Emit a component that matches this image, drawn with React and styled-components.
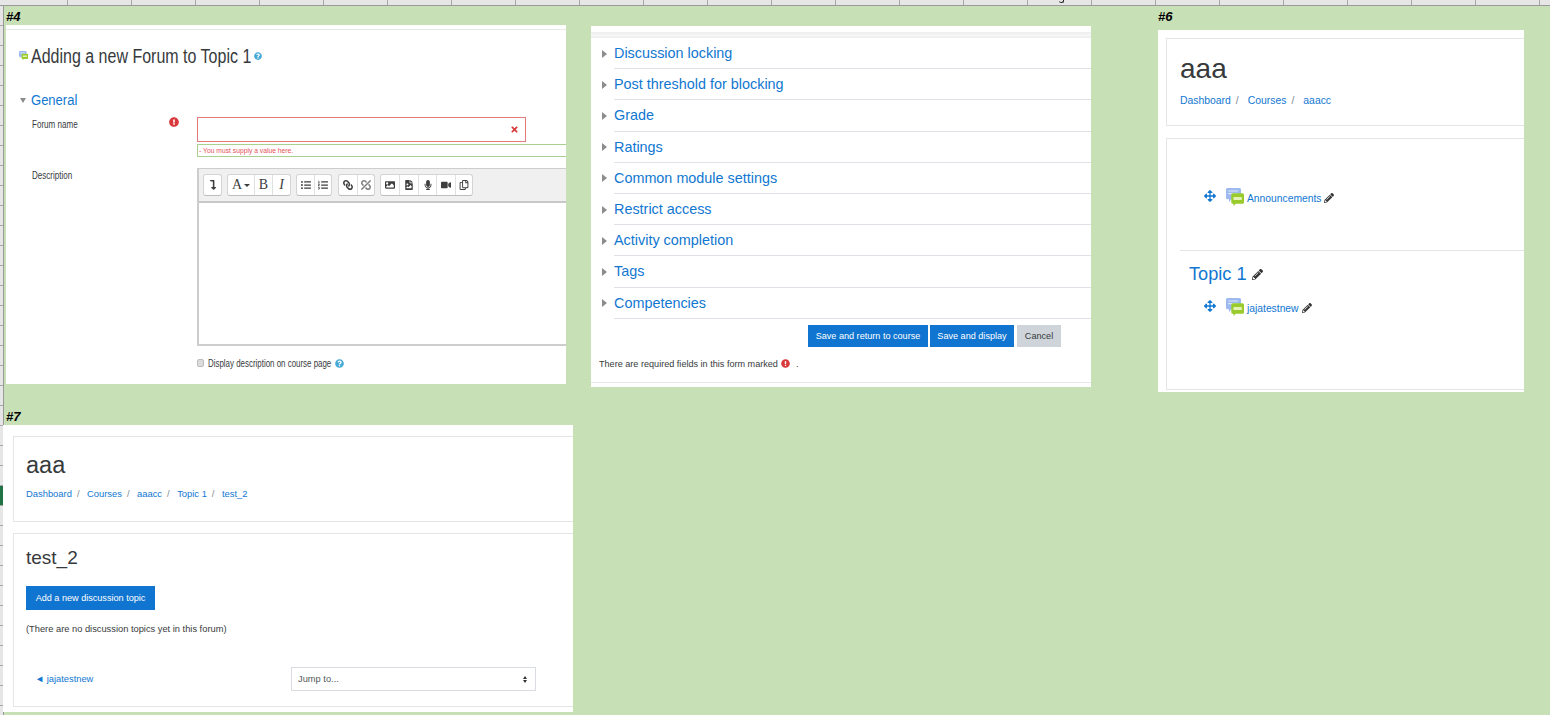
import styled, { createGlobalStyle } from 'styled-components';
import {
  FaArrowsAlt,
  FaExclamationCircle,
  FaLink,
  FaListOl,
  FaListUl,
  FaMicrophone,
  FaRegCopy,
  FaPencilAlt,
  FaQuestionCircle,
  FaTimes,
  FaUnlink,
  FaVideo,
  FaImage,
  FaFileImage,
  FaLevelDownAlt,
} from 'react-icons/fa';

const LINK = '#1177d1';
const TEXT = '#373a3c';
const LINE = '#e5e5e5';

const GlobalStyle = createGlobalStyle`
  html, body {
    margin: 0;
    padding: 0;
    overflow: hidden;
    background: #c8e0b5;
  }
  * { box-sizing: border-box; }
`;

const Sheet = styled.div`
  position: relative;
  width: 1550px;
  height: 715px;
  display: grid;
  grid-template-columns: 4px 1fr;
  grid-template-rows: 6px 1fr;
  font-family: 'Liberation Sans', Arial, sans-serif;
  color: ${TEXT};
  overflow: hidden;
`;

const Corner = styled.div`
  background: #e6e6e6;
  border-bottom: 1px solid #9a9a9a;
`;

const ColumnHeader = styled.div`
  display: flex;
  background: #e6e6e6;
  border-bottom: 1px solid #9a9a9a;
  padding-left: 63px;
`;

const ColumnCell = styled.div`
  flex: 0 0 64px;
  border-left: 1px solid #a8a8a8;
`;

const CursorMark = styled.i`
  position: absolute;
  left: 1059px;
  top: 0;
  width: 5px;
  height: 3px;
  border-bottom: 1px solid #222;
  border-right: 1px solid #222;
  border-radius: 0 0 3px 3px;
`;

const RowHeader = styled.div`
  display: flex;
  flex-direction: column;
  background: #e6e6e6;
  border-right: 1px solid #9a9a9a;
`;

const RowCell = styled.div`
  flex: 0 0 20px;
  border-bottom: 1px solid #a8a8a8;
  background: ${(p) => (p.$active ? '#217346' : 'transparent')};
`;

const Canvas = styled.div`
  position: relative;
  background: #c8e0b5;
`;

const SheetLabel = styled.span`
  position: absolute;
  left: ${(p) => p.$x}px;
  top: ${(p) => p.$y}px;
  font: italic bold 13px 'Liberation Sans', sans-serif;
  color: #000;
`;

const Shot = styled.section`
  position: absolute;
  left: ${(p) => p.$x}px;
  top: ${(p) => p.$y}px;
  width: ${(p) => p.$w}px;
  height: ${(p) => p.$h}px;
  background: #fff;
  overflow: hidden;
`;

/* Panel #4: form, captured slightly squeezed */
const Squeezed = styled.span`
  display: inline-block;
  white-space: nowrap;
  transform: scaleX(${(p) => p.$k || 0.8});
  transform-origin: left center;
`;

const FormShot = styled(Shot)`
  border-top: 1px solid #fff;
  padding: 3px 0 0 13px;
  &::before {
    content: '';
    display: block;
    height: 1px;
    margin: 0 0 0 -13px;
    background: #e8e8e8;
  }
`;

const PageTitle = styled.h2`
  display: flex;
  align-items: center;
  height: 24px;
  margin: 14px 0 0;
  font-size: 20px;
  font-weight: 400;
  line-height: 24px;
  gap: 3px;
`;

const TitleText = styled.span`
  width: 220px;
`;

const SectionRow = styled.div`
  display: flex;
  align-items: center;
  height: 18px;
  margin-top: 23px;
  color: ${LINK};
  font-size: 15.5px;
`;

const FieldRow = styled.div`
  display: flex;
  align-items: flex-start;
  margin-top: ${(p) => p.$top || 0}px;
`;

const FieldLabel = styled.div`
  flex: 0 0 ${(p) => p.$w || 178}px;
  padding-left: 13px;
  font-size: 11.5px;
  line-height: 14px;
`;

const RequiredMark = styled.div`
  flex: 0 0 28px;
  color: #d9393b;
  font-size: 10px;
  line-height: 14px;
`;

const FieldBody = styled.div`
  display: flex;
  flex-direction: column;
  width: 369px;
  flex: none;
`;

const TextInput = styled.div`
  display: flex;
  align-items: center;
  justify-content: flex-end;
  width: 329px;
  height: 25px;
  padding-right: 6px;
  border: 1px solid #e27a7a;
  color: #d9393b;
  font-size: 9px;
`;

const ErrorNote = styled.div`
  display: flex;
  align-items: center;
  height: 13px;
  margin-top: 2px;
  border: 1px solid #a9d08e;
  border-right: none;
  color: #e6505a;
  font-size: 7.5px;
  padding-left: 1px;
`;

const Editor = styled.div`
  height: 178px;
  border: solid #cdcdcd;
  border-width: 1px 0 2px 2px;
`;

const EditorBar = styled.div`
  display: flex;
  gap: 5px;
  height: 34px;
  padding: 5px 0 0 4px;
  background: #f0f0f0;
  border-bottom: 2px solid #c8c8c8;
`;

const ToolGroup = styled.div`
  display: flex;
  height: 22px;
  margin-left: ${(p) => p.$shift || 0}px;
  background: #fff;
  border: 1px solid #d4d4d4;
  border-bottom-color: #bdbdbd;
  border-radius: 3px;
`;

const ToolButton = styled.div`
  display: flex;
  align-items: center;
  justify-content: center;
  gap: 2px;
  width: ${(p) => p.$w || 17}px;
  color: #3e3e3e;
  font: ${(p) => (p.$italic ? 'italic ' : '')}14px 'Liberation Serif', serif;
  border-left: 1px solid #e0e0e0;
  &:first-child { border-left: none; }
  svg {
    width: 10px;
    height: 10px;
    transform: ${(p) => (p.$flip ? 'scaleX(-1)' : 'none')};
    opacity: ${(p) => (p.$faint ? 0.65 : 1)};
  }
`;

const EditorCaret = styled.i`
  width: 0;
  height: 0;
  border-left: 3px solid transparent;
  border-right: 3px solid transparent;
  border-top: 3px solid #3e3e3e;
`;

const CheckRow = styled.div`
  display: flex;
  align-items: center;
  height: 12px;
  margin: 11px 0 0 178px;
  font-size: 11px;
`;

const CheckBox = styled.i`
  flex: none;
  width: 7px;
  height: 8px;
  margin-right: 4px;
  background: #dcdcdc;
  border: 1px solid #bcbcbc;
  border-radius: 2px;
`;

const CheckText = styled.span`
  width: 127px;
`;

const HelpMark = styled(FaQuestionCircle)`
  flex: none;
  color: ${(p) => p.$color || '#46a9d6'};
  font-size: ${(p) => p.$size || 9}px;
`;

const RightCaret = styled.i`
  flex: none;
  width: 0;
  height: 0;
  border-top: 4px solid transparent;
  border-bottom: 4px solid transparent;
  border-left: 5px solid #8c8c8c;
`;

const DownCaret = styled.i`
  flex: none;
  width: 0;
  height: 0;
  margin: 0 5px 0 1px;
  border-left: 3.5px solid transparent;
  border-right: 3.5px solid transparent;
  border-top: 5px solid #8c8c8c;
`;

/* Panel: collapsed sections */
const SectionsShot = styled(Shot)`
  padding-top: 6px;
`;

const TopBand = styled.div`
  height: 6px;
  background: linear-gradient(#eeeeee, #f6f6f6 60%, #ececec);
`;

const Collapsed = styled.div`
  display: flex;
  align-items: center;
  height: 31.2px;
  padding-left: 11px;
  color: ${LINK};
  font-size: 14.4px;
`;

const CollapsedTitle = styled.div`
  flex: 1;
  height: 100%;
  margin-left: 7px;
  display: flex;
  align-items: center;
  border-bottom: 1px solid #dfe2e6;
`;

const ActionRow = styled.div`
  display: flex;
  gap: 2px;
  margin: 6px 0 0 217px;
`;

const Button = styled.div`
  display: flex;
  align-items: center;
  justify-content: center;
  width: ${(p) => (p.$w ? `${p.$w}px` : 'auto')};
  height: ${(p) => p.$h || 22}px;
  margin-left: ${(p) => p.$gap || 0}px;
  margin-top: ${(p) => p.$top || 0}px;
  background: ${(p) => (p.$muted ? '#ced4da' : '#0f75d0')};
  color: ${(p) => (p.$muted ? TEXT : '#fff')};
  font-size: 9.1px;
  white-space: nowrap;
`;

const RequiredNote = styled.div`
  display: flex;
  align-items: center;
  height: 14px;
  margin: 10px 0 0 8px;
  font-size: 9.1px;
  svg { margin: 0 6px 0 3px; color: #d9393b; font-size: 9px; }
`;

const BottomRule = styled.div`
  height: 1px;
  margin-top: 11px;
  background: #e8e8e8;
`;

/* Moodle course pages */
const CourseShot = styled(Shot)`
  padding: ${(p) => p.$pad || '8px 0 0 8px'};
`;

const Card = styled.div`
  height: ${(p) => p.$h}px;
  margin-top: ${(p) => p.$top || 0}px;
  padding: 0 0 0 ${(p) => p.$left || 13}px;
  border: 1px solid ${LINE};
  border-right: none;
`;

const CourseTitle = styled.h1`
  margin: ${(p) => p.$top}px 0 0;
  font-size: ${(p) => p.$size}px;
  font-weight: 400;
  line-height: 32px;
`;

const Crumbs = styled.nav`
  display: flex;
  margin-top: ${(p) => p.$top}px;
  font-size: ${(p) => p.$size}px;
  line-height: 14px;
  color: ${LINK};
`;

const Crumb = styled.span`
  &:not(:last-child)::after {
    content: '/';
    color: #818a91;
    margin: 0 ${(p) => p.$after}px 0 5px;
  }
`;

const Activity = styled.div`
  display: flex;
  align-items: center;
  height: 20px;
  margin: ${(p) => p.$top}px 0 0 25px;
  color: ${LINK};
  font-size: 10.3px;
`;

const MoveIcon = styled(FaArrowsAlt)`
  flex: none;
  margin: -4px 10px 0 -1px;
  font-size: 12px;
  color: ${LINK};
`;

const PenIcon = styled(FaPencilAlt)`
  flex: none;
  margin-left: ${(p) => p.$gap || 3}px;
  color: #333;
  font-size: ${(p) => p.$size || 10}px;
`;

const ForumIconBox = styled.svg`
  flex: none;
  width: ${(p) => p.$s || 18}px;
  height: ${(p) => p.$s || 18}px;
  margin-right: ${(p) => p.$gap ?? 3}px;
  margin-top: -2px;
`;

const Divider = styled.div`
  height: 1px;
  margin-top: 42px;
  background: ${LINE};
`;

const TopicHeading = styled.h3`
  display: flex;
  align-items: center;
  height: 24px;
  margin: 11px 0 0 9px;
  font-size: 18.2px;
  font-weight: 400;
  color: ${LINK};
`;

const Paragraph = styled.p`
  margin: 12px 0 0;
  font-size: 9.3px;
  line-height: 14px;
`;

const BottomRow = styled.div`
  display: flex;
  align-items: center;
  justify-content: space-between;
  width: 510px;
  margin-top: 31px;
  padding-left: 9px;
`;

const BackLink = styled.span`
  color: ${LINK};
  font-size: 9.3px;
`;

const JumpSelect = styled.div`
  display: flex;
  align-items: center;
  justify-content: space-between;
  width: 245px;
  height: 24px;
  padding: 0 8px 0 6px;
  border: 1.5px solid #d9dce1;
  font-size: 9.3px;
  color: #55595c;
`;

const SelectArrows = styled.span`
  display: flex;
  flex-direction: column;
  gap: 1px;
  &::before, &::after {
    content: '';
    border-left: 2.5px solid transparent;
    border-right: 2.5px solid transparent;
  }
  &::before { border-bottom: 3px solid #333; }
  &::after { border-top: 3px solid #333; }
`;

const ForumIcon = ({ size, gap }) => (
  <ForumIconBox $s={size} $gap={gap} viewBox="0 0 24 24">
    <path d="M2 0h16a2 2 0 0 1 2 2v11a2 2 0 0 1-2 2H7l-3 4v-4H2a2 2 0 0 1-2-2V2a2 2 0 0 1 2-2z" fill="#9db9ee" />
    <path d="M3 4h13M3 7.5h13" stroke="#dbe6fa" strokeWidth="1.5" />
    <path d="M9 7h13a2 2 0 0 1 2 2v10a2 2 0 0 1-2 2h-9l-3 3v-3H9a2 2 0 0 1-2-2V9a2 2 0 0 1 2-2z" fill="#9acb2c" />
    <path d="M10 12h11v4H10z" fill="#e4f2b8" />
  </ForumIconBox>
);

const columns = Array.from({ length: 24 });
const rows = Array.from({ length: 36 });
const sections = [
  'Discussion locking',
  'Post threshold for blocking',
  'Grade',
  'Ratings',
  'Common module settings',
  'Restrict access',
  'Activity completion',
  'Tags',
  'Competencies',
];
const shortCrumbs = ['Dashboard', 'Courses', 'aaacc'];
const longCrumbs = [...shortCrumbs, 'Topic 1', 'test_2'];

const App = () => (
  <>
    <GlobalStyle />
    <Sheet>
      <Corner />
      <ColumnHeader>
        {columns.map((_, i) => (
          <ColumnCell key={i} />
        ))}
      </ColumnHeader>
      <CursorMark />
      <RowHeader>
        {rows.map((_, i) => (
          <RowCell key={i} $active={i === 24} />
        ))}
      </RowHeader>
      <Canvas>
        <SheetLabel $x={2} $y={3}>#4</SheetLabel>
        <SheetLabel $x={2} $y={403}>#7</SheetLabel>
        <SheetLabel $x={1154} $y={3}>#6</SheetLabel>

        <FormShot $x={2} $y={19} $w={560} $h={359}>
          <PageTitle>
            <ForumIcon size={9} gap={0} />
            <TitleText>
              <Squeezed>Adding a new Forum to Topic 1</Squeezed>
            </TitleText>
            <HelpMark $size={8} />
          </PageTitle>
          <SectionRow>
            <DownCaret />
            <Squeezed $k={0.84}>General</Squeezed>
          </SectionRow>
          <FieldRow $top={8}>
            <FieldLabel $w={150}>
              <Squeezed $k={0.7}>Forum name</Squeezed>
            </FieldLabel>
            <RequiredMark>
              <FaExclamationCircle />
            </RequiredMark>
            <FieldBody>
              <TextInput>
                <FaTimes />
              </TextInput>
              <ErrorNote>
                <Squeezed $k={0.9}>- You must supply a value here.</Squeezed>
              </ErrorNote>
            </FieldBody>
          </FieldRow>
          <FieldRow $top={11}>
            <FieldLabel>
              <Squeezed $k={0.7}>Description</Squeezed>
            </FieldLabel>
            <FieldBody>
              <Editor>
                <EditorBar>
                  <ToolGroup>
                    <ToolButton><FaLevelDownAlt /></ToolButton>
                  </ToolGroup>
                  <ToolGroup>
                    <ToolButton $w={26}>A<EditorCaret /></ToolButton>
                    <ToolButton $w={18}>B</ToolButton>
                    <ToolButton $w={18} $italic>I</ToolButton>
                  </ToolGroup>
                  <ToolGroup>
                    <ToolButton><FaListUl /></ToolButton>
                    <ToolButton><FaListOl /></ToolButton>
                  </ToolGroup>
                  <ToolGroup $shift={1}>
                    <ToolButton $w={18} $flip><FaLink /></ToolButton>
                    <ToolButton $flip $faint><FaUnlink /></ToolButton>
                  </ToolGroup>
                  <ToolGroup>
                    <ToolButton $w={18}><FaImage /></ToolButton>
                    <ToolButton $w={19}><FaFileImage /></ToolButton>
                    <ToolButton $w={18}><FaMicrophone /></ToolButton>
                    <ToolButton $w={19}><FaVideo /></ToolButton>
                    <ToolButton $w={17}><FaRegCopy /></ToolButton>
                  </ToolGroup>
                </EditorBar>
              </Editor>
            </FieldBody>
          </FieldRow>
          <CheckRow>
            <CheckBox />
            <CheckText>
              <Squeezed $k={0.72}>Display description on course page</Squeezed>
            </CheckText>
            <HelpMark $size={9} />
          </CheckRow>
        </FormShot>

        <SectionsShot $x={587} $y={20} $w={500} $h={361}>
          <TopBand />
          {sections.map((name) => (
            <Collapsed key={name}>
              <RightCaret />
              <CollapsedTitle>{name}</CollapsedTitle>
            </Collapsed>
          ))}
          <ActionRow>
            <Button $w={120}>Save and return to course</Button>
            <Button $w={84}>Save and display</Button>
            <Button $w={44} $gap={1} $muted>Cancel</Button>
          </ActionRow>
          <RequiredNote>
            There are required fields in this form marked
            <FaExclamationCircle />.
          </RequiredNote>
          <BottomRule />
        </SectionsShot>

        <CourseShot $x={1154} $y={24} $w={366} $h={362}>
          <Card $h={88}>
            <CourseTitle $top={14} $size={28}>aaa</CourseTitle>
            <Crumbs $top={9} $size={10.4}>
              {shortCrumbs.map((c) => (
                <Crumb key={c} $after={9}>{c}</Crumb>
              ))}
            </Crumbs>
          </Card>
          <Card $h={252} $top={12}>
            <Activity $top={49}>
              <MoveIcon />
              <ForumIcon />
              Announcements
              <PenIcon />
            </Activity>
            <Divider />
            <TopicHeading>
              Topic 1
              <PenIcon $gap={5} $size={11} />
            </TopicHeading>
            <Activity $top={12}>
              <MoveIcon />
              <ForumIcon />
              jajatestnew
              <PenIcon />
            </Activity>
          </Card>
        </CourseShot>

        <CourseShot $x={-1} $y={419} $w={570} $h={287} $pad="11px 0 0 10px">
          <Card $h={86} $left={12}>
            <CourseTitle $top={12} $size={23.5}>aaa</CourseTitle>
            <Crumbs $top={6} $size={9.4}>
              {longCrumbs.map((c) => (
                <Crumb key={c} $after={7.5}>{c}</Crumb>
              ))}
            </Crumbs>
          </Card>
          <Card $h={174} $top={11} $left={12}>
            <CourseTitle $top={8} $size={19}>test_2</CourseTitle>
            <Button $w={129} $h={24} $top={12}>Add a new discussion topic</Button>
            <Paragraph>(There are no discussion topics yet in this forum)</Paragraph>
            <BottomRow>
              <BackLink>◄ jajatestnew</BackLink>
              <JumpSelect>
                Jump to...
                <SelectArrows />
              </JumpSelect>
            </BottomRow>
          </Card>
        </CourseShot>
      </Canvas>
    </Sheet>
  </>
);

export default App;
